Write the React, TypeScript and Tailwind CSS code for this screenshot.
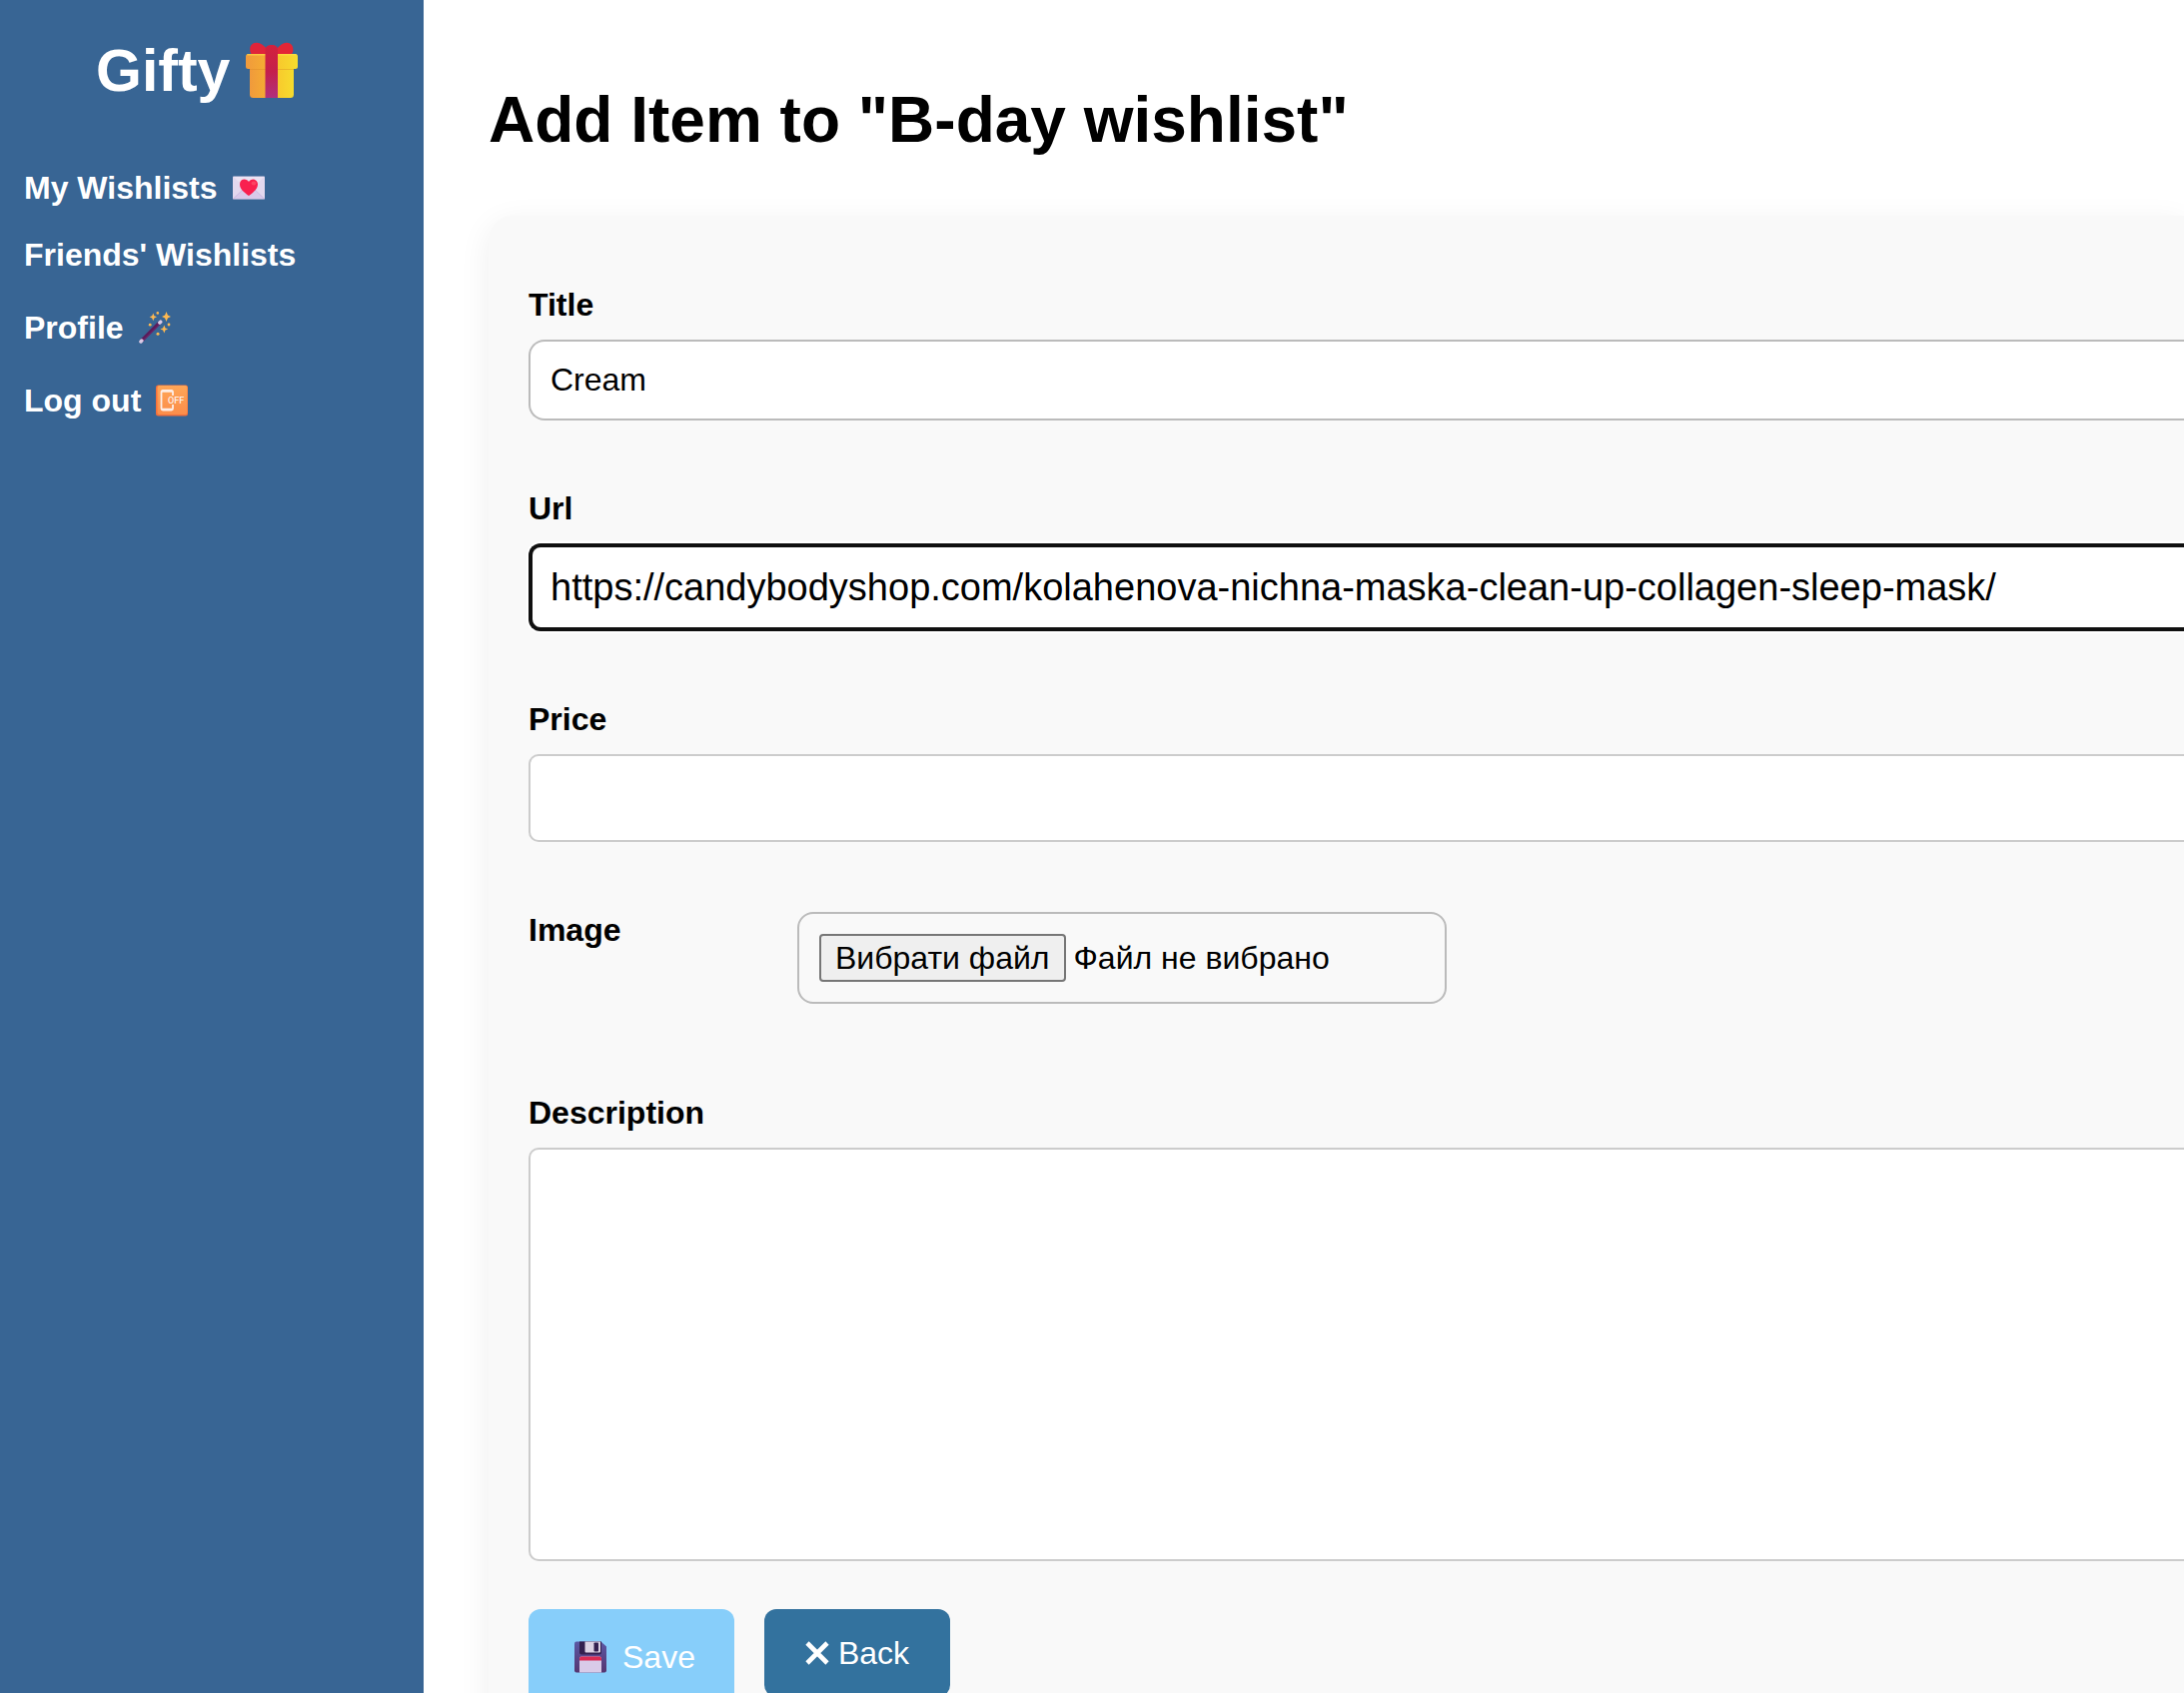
import type { ReactNode } from "react";

function GiftIcon() {
  return (
    <svg viewBox="0 0 52 56" className="h-14 w-[52px] shrink-0" aria-hidden="true">
      <defs>
        <linearGradient id="giftBox" x1="0" x2="1" y1="0" y2="0">
          <stop offset="0" stopColor="#f09a3c" />
          <stop offset="0.4" stopColor="#f5ad32" />
          <stop offset="0.6" stopColor="#f8c82c" />
          <stop offset="1" stopColor="#f6dc2e" />
        </linearGradient>
        <linearGradient id="giftRibbon" x1="0" x2="0" y1="0" y2="1">
          <stop offset="0" stopColor="#d3213c" />
          <stop offset="0.5" stopColor="#c41f4c" />
          <stop offset="1" stopColor="#b0307e" />
        </linearGradient>
      </defs>
      <path d="M21 7C18 3 14 0.500 10.500 0.800C6 1.200 4 4.500 4.200 8C4.300 10 5 11.500 6 12.500H21Z" fill="#e0243a" />
      <path d="M31 7C34 3 38 0.500 41 0.800C46 1.200 47.600 4.500 47.400 8C47.300 10 46.600 11.500 45.500 12.500H31Z" fill="#e32636" />
      <rect x="4" y="22" width="44" height="34" rx="3.500" fill="url(#giftBox)" />
      <rect x="4" y="26" width="44" height="2" fill="#d98a22" opacity="0.4" />
      <rect x="0" y="12" width="52" height="15" rx="2.500" fill="url(#giftBox)" />
      <rect x="1" y="12" width="50" height="1.500" rx="0.750" fill="#ffe04a" opacity="0.6" />
      <path d="M19.500 8C19.500 4.500 22 3 26 3S32 4.500 32 8V56H19.500Z" fill="url(#giftRibbon)" />
    </svg>
  );
}

function LoveLetterIcon() {
  return (
    <svg viewBox="0 0 32 32" className="size-8" aria-hidden="true">
      <rect x="0" y="4.500" width="32" height="23" rx="0.800" fill="#e3d8ee" />
      <path d="M0 27L12 16H20L32 27Z" fill="#d9c9ea" />
      <path d="M0.500 27L12 16M31.500 27L20 16" stroke="#c3b2dc" strokeWidth="0.700" fill="none" />
      <path d="M0.500 5L16 19L31.500 5Z" fill="#ebe3f3" />
      <path
        d="M16 24C11 20.500 7 17 7 12.500C7 9.500 9 7.600 11.600 7.600C13.500 7.600 15.200 8.500 16 10C16.800 8.500 18.500 7.600 20.400 7.600C23 7.600 25 9.500 25 12.500C25 17 21 20.500 16 24Z"
        fill="#f9204f"
      />
      <ellipse cx="21" cy="11.500" rx="2.400" ry="2" fill="#ff5a72" opacity="0.6" />
    </svg>
  );
}

function WandIcon() {
  return (
    <svg viewBox="0 0 32 32" className="size-8" aria-hidden="true">
      <path d="M2.500 29.300L21.500 10.300" stroke="#5b1b5c" strokeWidth="3.400" strokeLinecap="round" />
      <path d="M3.500 29.800L20 13.500" stroke="#7d2d72" strokeWidth="0.800" />
      <path d="M2 29.900L2.800 29.100M20.900 11L21.700 10.200" stroke="#d9cbe6" strokeWidth="3.600" strokeLinecap="round" />
      <g fill="#ffb950">
        <path d="M27.500 0L28.900 3.600L32 5L28.900 6.400L27.500 10L26.100 6.400L23 5L26.100 3.600Z" />
        <path d="M14.300 1.500L15.400 4.200L18 5.300L15.400 6.400L14.300 9.200L13.200 6.400L10.600 5.300L13.200 4.200Z" />
        <path d="M25.300 13.600L26.500 16.400L29.200 17.500L26.500 18.600L25.300 21.600L24.100 18.600L21.400 17.500L24.100 16.400Z" />
        <circle cx="18.800" cy="1.400" r="1.300" />
        <circle cx="11.200" cy="13.200" r="1.400" />
        <circle cx="30" cy="13" r="1.400" />
        <circle cx="19" cy="22.300" r="1.500" />
      </g>
    </svg>
  );
}

function PhoneOffIcon() {
  return (
    <svg viewBox="0 0 32 32" className="size-8" aria-hidden="true">
      <defs>
        <linearGradient id="phoneOff" x1="0" x2="0" y1="0" y2="1">
          <stop offset="0" stopColor="#ffa657" />
          <stop offset="1" stopColor="#fb8d4a" />
        </linearGradient>
      </defs>
      <rect x="0" y="0.500" width="32" height="31" rx="2.500" fill="#f4703b" />
      <rect x="1.500" y="1" width="30" height="29" rx="2" fill="url(#phoneOff)" />
      <path
        d="M17 11V7.500Q17 6 15.500 6H7Q5.500 6 5.500 7.500V24Q5.500 25.500 7 25.500H15.500Q17 25.500 17 24V20"
        fill="none"
        stroke="#fdeee8"
        strokeWidth="1.800"
      />
      <path d="M6 6.800H16.500M6 24.800H16.500" stroke="#fdeee8" strokeWidth="2" />
      <text
        x="12"
        y="19"
        fontSize="9"
        fontFamily="Roboto, sans-serif"
        fontWeight="500"
        fill="#fdeee8"
      >
        OFF
      </text>
    </svg>
  );
}

function FloppyIcon() {
  return (
    <svg viewBox="0 0 32 32" className="size-8 shrink-0" aria-hidden="true">
      <defs>
        <linearGradient id="floppy" x1="0" x2="0" y1="0" y2="1">
          <stop offset="0" stopColor="#5b58a4" />
          <stop offset="1" stopColor="#553570" />
        </linearGradient>
      </defs>
      <path d="M2 0.500H26.500L32 5.500V29.500Q32 31.500 30 31.500H2Q0 31.500 0 29.500V2.500Q0 0.500 2 0.500Z" fill="url(#floppy)" />
      <path d="M5 0.500H27V11.500Q27 13.500 25 13.500H7Q5 13.500 5 11.500Z" fill="#33204f" />
      <path d="M10.500 0.500H26V10.500Q26 11.500 25 11.500H11.500Q10.500 11.500 10.500 10.500Z" fill="#dcd3e4" />
      <rect x="19.500" y="1.500" width="4.500" height="9" rx="0.800" fill="#33204f" />
      <path d="M5 17.500Q5 15.500 7 15.500H25Q27 15.500 27 17.500V31.500H5Z" fill="#d9cbe8" />
      <path d="M5 19.500V17.500Q5 15.500 7 15.500H25Q27 15.500 27 17.500V19.500Z" fill="#d92b53" />
    </svg>
  );
}

function CrossIcon() {
  return (
    <svg viewBox="0 0 24 24" className="size-6 shrink-0" aria-hidden="true">
      <path d="M2 2L22 22M22 2L2 22" stroke="#fff" strokeWidth="4.600" />
    </svg>
  );
}

function NavLink({ label, icon }: { label: string; icon?: ReactNode }) {
  return (
    <a
      href="#"
      className={
        icon
          ? "flex h-[42px] items-end gap-[15px] leading-9 font-bold text-white"
          : "flex h-9 items-end leading-9 font-bold text-white"
      }
    >
      {label}
      {icon && <span className="mb-0.5">{icon}</span>}
    </a>
  );
}

function Field({ id, label, children }: { id: string; label: string; children: ReactNode }) {
  return (
    <div className="flex flex-col gap-[17px]">
      <label htmlFor={id} className="leading-9 font-bold">
        {label}
      </label>
      {children}
    </div>
  );
}

export default function App() {
  return (
    <div className="flex h-screen overflow-hidden bg-white font-['Liberation_Sans',Arial,sans-serif] text-[32px] text-black">
      <aside className="w-[424px] shrink-0 bg-[#386594] pt-[38px]">
        <div className="flex gap-4 pl-24 text-[59px] leading-[66px] font-bold text-white">
          Gifty
          <div className="pt-1">
            <GiftIcon />
          </div>
        </div>
        <nav className="mt-[60px] flex flex-col gap-[31px] pl-6">
          <NavLink label="My Wishlists" icon={<LoveLetterIcon />} />
          <NavLink label="Friends' Wishlists" />
          <NavLink label="Profile" icon={<WandIcon />} />
          <NavLink label="Log out" icon={<PhoneOffIcon />} />
        </nav>
      </aside>

      <main className="min-w-0 flex-1 overflow-hidden pt-[84px] pl-[65px]">
        <h1 className="text-[64px] leading-[72px] font-bold">Add Item to "B-day wishlist"</h1>

        <form
          className="mt-[60px] rounded-l-3xl bg-[#f9f9f9] pt-[71px] pb-20 pl-10 shadow-[0_8px_32px_rgba(0,0,0,0.07)]"
          onSubmit={(e) => e.preventDefault()}
        >
          <div className="flex flex-col gap-[70px]">
            <Field id="title" label="Title">
              <input
                id="title"
                type="text"
                defaultValue="Cream"
                className="h-[81px] w-full rounded-l-2xl border-2 border-r-0 border-[#bbb] bg-white px-5 outline-none"
              />
            </Field>
            <Field id="url" label="Url">
              <input
                id="url"
                type="text"
                defaultValue="https://candybodyshop.com/kolahenova-nichna-maska-clean-up-collagen-sleep-mask/"
                className="h-[88px] w-full rounded-l-xl border-4 border-r-0 border-[#101010] bg-white px-[18px] text-[38px] shadow-[0_0_0_2px_#fff] outline-none"
              />
            </Field>
            <Field id="price" label="Price">
              <input
                id="price"
                type="text"
                className="h-[88px] w-full rounded-l-[10px] border-2 border-r-0 border-[#ccc] bg-white px-5 text-[38px] outline-none"
              />
            </Field>
            <div className="flex">
              <label htmlFor="image" className="w-[269px] leading-9 font-bold">
                Image
              </label>
              <label
                htmlFor="image"
                className="flex h-[92px] w-[650px] items-center gap-2 rounded-2xl border-2 border-[#bbb] pl-5 leading-9"
              >
                <input id="image" type="file" className="sr-only" />
                <span className="rounded border-2 border-[#767676] bg-[#efefef] px-[14px] py-1">
                  Вибрати файл
                </span>
                <span>Файл не вибрано</span>
              </label>
            </div>
          </div>

          <div className="mt-[91px]">
            <Field id="description" label="Description">
              <textarea
                id="description"
                className="block h-[414px] w-full resize-none rounded-l-[10px] border-2 border-r-0 border-[#ccc] bg-white p-5 outline-none"
              />
            </Field>
          </div>

          <div className="mt-12 flex items-start gap-[30px]">
            <button
              type="submit"
              className="flex h-24 w-[206px] items-center gap-4 rounded-xl bg-[#87cefa] pl-[46px] text-white"
            >
              <FloppyIcon />
              Save
            </button>
            <button
              type="button"
              className="flex h-[88px] w-[186px] items-center justify-center gap-[9px] rounded-xl bg-[#33729e] text-white"
            >
              <CrossIcon />
              Back
            </button>
          </div>
        </form>
      </main>
    </div>
  );
}
